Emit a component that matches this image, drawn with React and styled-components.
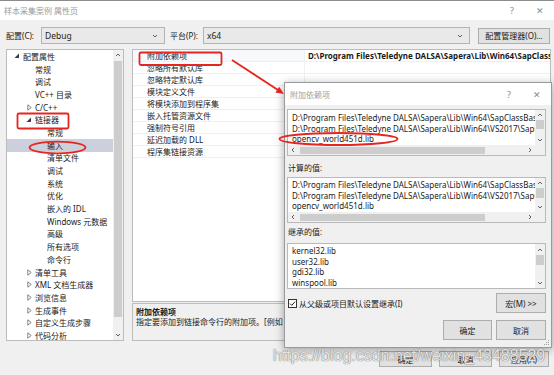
import React from 'react';
import styled, { createGlobalStyle } from 'styled-components';

const GlobalStyle = createGlobalStyle`
  html, body { margin: 0; padding: 0; }
  body {
    width: 554px; height: 375px; overflow: hidden; background: #f0f0f0;
    font-family: "Noto Sans", "Noto Sans CJK SC", sans-serif; font-size: 8px; color: #1a1a1a;
  }
  * { box-sizing: border-box; }
`;

const Window = styled.div`
  position: relative; width: 554px; height: 375px; display: flex; flex-direction: column;
  background: #f0f0f0; overflow: hidden;
`;

const TitleBar = styled.div`
  height: 20px; flex: none; display: flex; align-items: center; background: #fff;
  border-top: 1px solid #8c8c8c; padding-left: 4px; color: #9a9a9a;
`;

const TitleControls = styled.div`
  margin-left: auto; display: flex; align-items: center; gap: 22px; padding-right: 10px;
  color: #8a8a8a; font-size: 9px;
`;

const ConfigRow = styled.div`
  display: flex; align-items: center; height: 17px; margin-top: 7px; padding-left: 6px; flex: none;
`;

const FieldLabel = styled.span`
  width: ${p => p.$w}px; margin-left: ${p => p.$ml || 0}px; flex: none; white-space: nowrap;
`;

const Select = styled.div`
  width: ${p => p.$w}px; height: 17px; flex: none; display: flex; align-items: center;
  border: 1px solid #b4b4b4; background: #e9e9e9; padding: 0 6px 0 3px;
  font-size: 8.5px; color: #222;
  & > span { flex: 1; }
`;

const Button = styled.div`
  width: ${p => p.$w}px; height: ${p => p.$h || 16}px; flex: none; display: flex; align-items: center;
  justify-content: center; border: 1px solid #adadad; background: #e1e1e1; white-space: nowrap;
  margin-left: ${p => p.$ml || 0}px;
`;

const Body = styled.div`
  display: flex; margin-top: 5px; height: 292px; padding: 0 3px 0 6px; flex: none;
`;

const TreePanel = styled.div`
  width: 118px; flex: none; border: 1px solid #bcbcbc; background: #fff; display: flex; overflow: hidden;
`;

const TreeList = styled.div`
  flex: 1; min-width: 0; overflow: hidden;
`;

const TreeRow = styled.div`
  display: flex; align-items: center; height: 12.7px; white-space: nowrap;
  padding-left: ${p => 4 + p.$depth * 12}px;
  background: ${p => (p.$selected ? '#ccd0dc' : 'transparent')};
`;

const Toggle = styled.span`
  width: 12px; flex: none; display: flex; align-items: center; justify-content: center;
`;

const VScroll = styled.div`
  width: 10px; flex: none; display: flex; flex-direction: column; background: #f0f0f0;
  ${p => p.$area ? `grid-area: ${p.$area};` : ''}
`;

const ArrowCell = styled.div`
  height: ${p => p.$size || 10}px; width: ${p => p.$w || 10}px; flex: none; display: flex;
  align-items: center; justify-content: center;
`;

const Track = styled.div`
  flex: 1; min-height: 0; min-width: 0; display: flex;
  flex-direction: ${p => (p.$horizontal ? 'row' : 'column')};
  align-items: ${p => (p.$horizontal ? 'center' : 'stretch')};
  padding: ${p => (p.$horizontal ? '0' : '0 1px')};
`;

const Thumb = styled.div`
  background: #cdcdcd; flex: none;
  ${p => p.$horizontal
    ? `margin-left: ${p.$offset}px; width: ${p.$size}px; height: 7px;`
    : `margin-top: ${p.$offset}px; height: ${p.$size}px;`}
`;

const RightCol = styled.div`
  flex: 1; margin-left: 8px; display: flex; flex-direction: column; min-width: 0;
`;

const Grid = styled.div`
  flex: 1; background: #fff; border: 1px solid #bcbcbc; overflow: hidden;
`;

const GridRow = styled.div`
  display: grid; grid-template-columns: 172px 1fr; height: 12px; border-bottom: 1px solid #f0f0f0;
  align-items: center; white-space: nowrap;
`;

const GridName = styled.div`
  padding-left: 14px; height: 100%; display: flex; align-items: center; border-right: 1px solid #f0f0f0;
  background: ${p => (p.$first ? '#f7f9fc' : 'transparent')};
`;

const GridValue = styled.div`
  padding-left: 3px; overflow: hidden; font-weight: ${p => (p.$bold ? 700 : 400)};
`;

const Desc = styled.div`
  height: 38px; flex: none; margin-top: 1px; border: 1px solid #bcbcbc; background: #f0f0f0;
  padding: 3px 3px; line-height: 10px; white-space: nowrap; overflow: hidden;
`;

const DescTitle = styled.div` font-weight: 700; `;

const Footer = styled.div`
  display: flex; justify-content: flex-end; gap: 7px; margin-top: 10px; padding-right: 5px; flex: none;
`;

/* Sub dialog */
const Dialog = styled.div`
  position: absolute; left: 284px; top: 82px; width: 268px; height: 266px;
  border: 1px solid #9a9a9a; background: #f0f0f0; box-shadow: 0 2px 9px rgba(0, 0, 0, 0.35);
  display: flex; flex-direction: column;
`;

const DialogTitle = styled.div`
  height: 22px; flex: none; background: #fff; display: flex; align-items: center;
  padding-left: 5px; color: #a0a0a0;
`;

const DialogBody = styled.div`
  flex: 1; padding: 0 5px 0 2px; display: flex; flex-direction: column; position: relative;
`;

const EditBox = styled.div`
  height: ${p => p.$h}px; margin-top: ${p => p.$mt}px; flex: none; border: 1px solid #b9b9b9; background: #fff;
  display: grid; grid-template-columns: 1fr 10px;
  grid-template-rows: ${p => (p.$hscroll ? '1fr 10px' : '1fr')};
  grid-template-areas: ${p => (p.$hscroll ? `"text v" "h c"` : `"text v"`)};
  overflow: hidden;
`;

const EditText = styled.div`
  grid-area: text; padding: ${p => p.$pt || 2}px 0 0 4px; line-height: 10.7px; overflow: hidden; white-space: nowrap;
  min-width: 0;
`;

const HScroll = styled.div`
  grid-area: h; display: flex; align-items: center; background: #f0f0f0; min-width: 0;
`;

const Corner = styled.div` grid-area: c; background: #f0f0f0; `;

const SectionLabel = styled.div`
  margin-top: ${p => p.$mt}px; line-height: 12px; padding-left: 1px; flex: none;
`;

const OptionRow = styled.div`
  display: flex; align-items: center; margin-top: 4px; height: 20px; flex: none;
`;

const CheckBox = styled.span`
  width: 9px; height: 9px; border: 1px solid #333; background: #fff; display: flex;
  align-items: center; justify-content: center; margin-left: 1px; margin-right: 2px; flex: none;
`;

const MacroButton = styled(Button)`
  margin-left: auto;
`;

const ButtonRow = styled.div`
  display: flex; justify-content: flex-end; gap: 4px; margin-top: 7px; flex: none;
`;

const Grip = styled.svg`
  position: absolute; right: 1px; bottom: 1px;
`;

const Watermark = styled.div`
  position: absolute; left: 273px; top: 347px; font-family: "Liberation Sans", Arial, sans-serif;
  font-size: 16px; color: rgba(238, 238, 238, 0.95); letter-spacing: 0;
  text-shadow: 0 0 1px rgba(90, 90, 90, 0.9), 0 0 1px rgba(120, 120, 120, 0.6);
  pointer-events: none; white-space: nowrap;
`;

const Annotations = styled.svg`
  position: absolute; left: 0; top: 0; pointer-events: none;
`;

const Chevron = ({ dir = 'down', size = 6 }) => {
  const paths = {
    down: 'M1 2 L3 4 L5 2',
    up: 'M1 4 L3 2 L5 4',
    left: 'M4 1 L2 3 L4 5',
    right: 'M2 1 L4 3 L2 5',
  };
  return (
    <svg width={size} height={size} viewBox="0 0 6 6">
      <path d={paths[dir]} fill="none" stroke="#606060" strokeWidth="1" />
    </svg>
  );
};

const TreeToggle = ({ state }) => {
  if (state === 'open') {
    return (
      <svg width="6" height="6" viewBox="0 0 6 6">
        <polygon points="5,0.5 5,5 0.5,5" fill="#3c3c3c" />
      </svg>
    );
  }
  if (state === 'closed') {
    return (
      <svg width="5" height="7" viewBox="0 0 5 7">
        <polygon points="0.8,0.8 4.2,3.5 0.8,6.2" fill="none" stroke="#777" strokeWidth="0.9" />
      </svg>
    );
  }
  return null;
};

const ScrollV = ({ offset, size, area, topCell = 10, bottomCell = 10 }) => (
  <VScroll $area={area}>
    <ArrowCell $size={topCell}><Chevron dir="up" /></ArrowCell>
    <Track>
      {size ? <Thumb $offset={offset} $size={size} /> : null}
    </Track>
    <ArrowCell $size={bottomCell}><Chevron dir="down" /></ArrowCell>
  </VScroll>
);

const ScrollH = () => (
  <HScroll>
    <ArrowCell $size={10}><Chevron dir="left" /></ArrowCell>
    <Track $horizontal>
      <Thumb $horizontal $offset={2} $size={185} />
    </Track>
    <ArrowCell $size={10}><Chevron dir="right" /></ArrowCell>
  </HScroll>
);

const treeItems = [
  { label: '配置属性', depth: 0, toggle: 'open' },
  { label: '常规', depth: 1 },
  { label: '调试', depth: 1 },
  { label: 'VC++ 目录', depth: 1 },
  { label: 'C/C++', depth: 1, toggle: 'closed' },
  { label: '链接器', depth: 1, toggle: 'open' },
  { label: '常规', depth: 2 },
  { label: '输入', depth: 2, selected: true },
  { label: '清单文件', depth: 2 },
  { label: '调试', depth: 2 },
  { label: '系统', depth: 2 },
  { label: '优化', depth: 2 },
  { label: '嵌入的 IDL', depth: 2 },
  { label: 'Windows 元数据', depth: 2 },
  { label: '高级', depth: 2 },
  { label: '所有选项', depth: 2 },
  { label: '命令行', depth: 2 },
  { label: '清单工具', depth: 1, toggle: 'closed' },
  { label: 'XML 文档生成器', depth: 1, toggle: 'closed' },
  { label: '浏览信息', depth: 1, toggle: 'closed' },
  { label: '生成事件', depth: 1, toggle: 'closed' },
  { label: '自定义生成步骤', depth: 1, toggle: 'closed' },
  { label: '代码分析', depth: 1, toggle: 'closed' },
];

const gridItems = [
  { name: '附加依赖项', value: 'D:\\Program Files\\Teledyne DALSA\\Sapera\\Lib\\Win64\\SapClassBasic.lib;D:\\Program Files', bold: true },
  { name: '忽略所有默认库' },
  { name: '忽略特定默认库' },
  { name: '模块定义文件' },
  { name: '将模块添加到程序集' },
  { name: '嵌入托管资源文件' },
  { name: '强制符号引用' },
  { name: '延迟加载的 DLL' },
  { name: '程序集链接资源' },
];

const pathLines = [
  'D:\\Program Files\\Teledyne DALSA\\Sapera\\Lib\\Win64\\SapClassBasic.lib',
  'D:\\Program Files\\Teledyne DALSA\\Sapera\\Lib\\Win64\\VS2017\\SapClassNet.lib',
  'opencv_world451d.lib',
];

const inherited = ['kernel32.lib', 'user32.lib', 'gdi32.lib', 'winspool.lib'];

export default function App() {
  return (
    <Window>
      <GlobalStyle />
      <TitleBar>
        <span>样本采集案例 属性页</span>
        <TitleControls>
          <span>?</span>
          <span>✕</span>
        </TitleControls>
      </TitleBar>

      <ConfigRow>
        <FieldLabel $w={35}>配置(C):</FieldLabel>
        <Select $w={124}><span>Debug</span><Chevron dir="down" /></Select>
        <FieldLabel $w={33} $ml={5}>平台(P):</FieldLabel>
        <Select $w={267}><span>x64</span><Chevron dir="down" /></Select>
        <Button $w={72} $ml={8}>配置管理器(O)...</Button>
      </ConfigRow>

      <Body>
        <TreePanel>
          <TreeList>
            {treeItems.map((it, i) => (
              <TreeRow key={i} $depth={it.depth} $selected={it.selected}>
                <Toggle><TreeToggle state={it.toggle} /></Toggle>
                <span>{it.label}</span>
              </TreeRow>
            ))}
          </TreeList>
          <ScrollV offset={1} size={256} />
        </TreePanel>

        <RightCol>
          <Grid>
            {gridItems.map((g, i) => (
              <GridRow key={i}>
                <GridName $first={i === 0}>{g.name}</GridName>
                <GridValue $bold={g.bold}>{g.value || ''}</GridValue>
              </GridRow>
            ))}
          </Grid>
          <Desc>
            <DescTitle>附加依赖项</DescTitle>
            <div>指定要添加到链接命令行的附加项。[例如 kernel32.lib]</div>
          </Desc>
        </RightCol>
      </Body>

      <Footer>
        <Button $w={53}>确定</Button>
        <Button $w={53}>取消</Button>
        <Button $w={50}>应用(A)</Button>
      </Footer>

      <Dialog>
        <DialogTitle>
          <span>附加依赖项</span>
          <TitleControls>
            <span>?</span>
            <span>✕</span>
          </TitleControls>
        </DialogTitle>
        <DialogBody>
          <EditBox $h={47} $mt={4} $hscroll>
            <EditText $pt={3}>
              {pathLines.map((l, i) => <div key={i}>{l}</div>)}
            </EditText>
            <ScrollV area="v" offset={0} size={9} />
            <ScrollH />
            <Corner />
          </EditBox>

          <SectionLabel $mt={6}>计算的值:</SectionLabel>
          <EditBox $h={46} $mt={3} $hscroll>
            <EditText>
              {pathLines.map((l, i) => <div key={i}>{l}</div>)}
            </EditText>
            <ScrollV area="v" offset={0} size={10} />
            <ScrollH />
            <Corner />
          </EditBox>

          <SectionLabel $mt={3}>继承的值:</SectionLabel>
          <EditBox $h={46} $mt={5}>
            <EditText>
              {inherited.map((l, i) => <div key={i}>{l}</div>)}
            </EditText>
            <ScrollV area="v" offset={0} size={10} topCell={11} bottomCell={11} />
          </EditBox>

          <OptionRow>
            <CheckBox>
              <svg width="7" height="7" viewBox="0 0 7 7">
                <path d="M1 3.6 L2.8 5.4 L6 1.6" fill="none" stroke="#222" strokeWidth="1" />
              </svg>
            </CheckBox>
            <span>从父级或项目默认设置继承(I)</span>
            <MacroButton $w={50} $h={20}>宏(M) &gt;&gt;</MacroButton>
          </OptionRow>

          <ButtonRow>
            <Button $w={49} $h={20}>确定</Button>
            <Button $w={50} $h={20}>取消</Button>
          </ButtonRow>

          <Grip width="7" height="7" viewBox="0 0 7 7">
            <g fill="#a0a0a0">
              <rect x="5" y="1" width="1" height="1" />
              <rect x="3" y="3" width="1" height="1" />
              <rect x="5" y="3" width="1" height="1" />
              <rect x="1" y="5" width="1" height="1" />
              <rect x="3" y="5" width="1" height="1" />
              <rect x="5" y="5" width="1" height="1" />
            </g>
          </Grip>
        </DialogBody>
      </Dialog>

      <Watermark>https://blog.csdn.net/weixin_43488529</Watermark>

      <Annotations width="554" height="375" viewBox="0 0 554 375">
        <g fill="none" stroke="#e5251f" strokeWidth="1.8">
          <rect x="17.5" y="113.5" width="51" height="15" rx="1.5" />
          <ellipse cx="57.5" cy="147.5" rx="28" ry="5.8" />
          <rect x="139.5" y="52.5" width="82" height="12.5" rx="1.5" />
          <ellipse cx="338.5" cy="139" rx="59" ry="6" />
          <line x1="232" y1="60" x2="278" y2="90" />
        </g>
        <polygon points="284,94 275.4,92.5 279.2,86.7" fill="#e5251f" />
      </Annotations>
    </Window>
  );
}
